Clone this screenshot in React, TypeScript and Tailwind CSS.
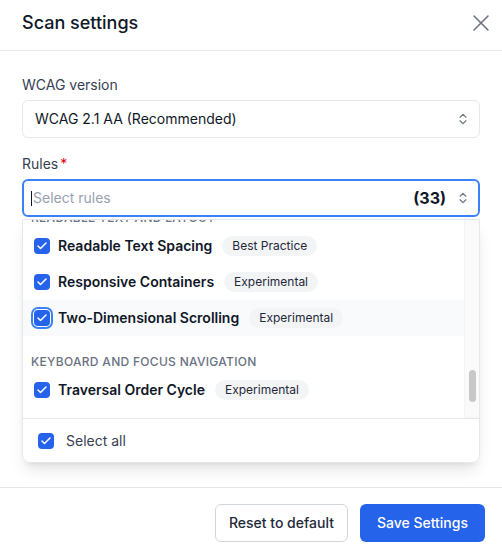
import { Check, ChevronsUpDown, X } from "lucide-react"

type Row =
  | { kind: "header"; title: string }
  | { kind: "rule"; name: string; badge: string; active?: boolean }

const rows: Row[] = [
  { kind: "header", title: "Readable text and layout" },
  { kind: "rule", name: "Readable Text Spacing", badge: "Best Practice" },
  { kind: "rule", name: "Responsive Containers", badge: "Experimental" },
  { kind: "rule", name: "Two-Dimensional Scrolling", badge: "Experimental", active: true },
  { kind: "header", title: "Keyboard and focus navigation" },
  { kind: "rule", name: "Traversal Order Cycle", badge: "Experimental" },
]

function Checkbox({ focused }: { focused?: boolean }) {
  return (
    <span
      className={
        "flex size-4 shrink-0 items-center justify-center rounded-[4px] bg-[#2563eb] text-white " +
        (focused ? "ring-2 ring-[#3b82f6] ring-offset-1" : "")
      }
    >
      <Check className="size-3" strokeWidth={3} />
    </span>
  )
}

export default function App() {
  return (
    <div className="flex min-h-[555px] w-full flex-col bg-white font-['Inter',sans-serif] text-gray-900">
      {/* Header */}
      <div className="flex h-[51px] items-center justify-between border-b border-gray-200 pr-[7px] pb-1 pl-[22px]">
        <h2 className="text-lg font-medium">Scan settings</h2>
        <X className="size-7 text-gray-500" strokeWidth={1.3} />
      </div>

      {/* Body */}
      <div className="flex flex-col px-[22px] pt-6 pb-6">
        <label className="mb-[5px] text-sm text-gray-700">WCAG version</label>
        <div className="flex h-[38px] items-center justify-between rounded-md border border-gray-200 pr-[9px] pl-3 text-sm text-gray-900">
          <span>WCAG 2.1 AA (Recommended)</span>
          <ChevronsUpDown className="size-3.5 text-gray-500" />
        </div>

        <label className="mt-4 mb-[5px] text-sm text-gray-700">
          Rules<span className="ml-0.5 text-red-600">*</span>
        </label>
        <div className="flex h-[38px] items-center justify-between rounded-md border-2 border-[#3b82f6] pr-[8px] pl-[7px]">
          <span className="flex items-center text-sm text-gray-400">
            <span className="mr-px h-[15px] w-px bg-gray-900" />
            Select rules
          </span>
          <span className="flex items-center gap-2.5">
            <span className="text-base font-bold text-gray-900">(33)</span>
            <ChevronsUpDown className="size-3.5 text-gray-500" />
          </span>
        </div>

        {/* Dropdown */}
        <div className="mt-[2px] overflow-hidden rounded-b-lg border border-gray-200 shadow-lg">
          <div className="flex h-[198px]">
            <div className="flex-1 overflow-hidden">
              <div className="mt-[-28px]">
                {rows.map((row, i) =>
                  row.kind === "header" ? (
                    <div
                      key={i}
                      className="h-9 px-2 pt-[18px] text-xs font-medium tracking-wide text-gray-500 uppercase"
                    >
                      {row.title}
                    </div>
                  ) : (
                    <div
                      key={i}
                      className={
                        "flex h-9 items-center gap-2 pl-[11px] " + (row.active ? "bg-gray-50" : "")
                      }
                    >
                      <Checkbox focused={row.active} />
                      <span className="text-sm font-semibold text-gray-900">{row.name}</span>
                      <span className="ml-0.5 rounded-full bg-gray-100 px-2.5 py-0.5 text-xs text-gray-800">
                        {row.badge}
                      </span>
                    </div>
                  )
                )}
              </div>
            </div>
            <div className="w-[15px] border-l border-gray-100 bg-[#fafafa]">
              <div className="mx-auto mt-[150px] h-[32px] w-[7px] rounded-full bg-[#c8c8c8]" />
            </div>
          </div>
          <div className="flex h-[44px] items-center gap-3 border-t border-gray-200 pl-[15px]">
            <Checkbox />
            <span className="text-sm text-gray-700">Select all</span>
          </div>
        </div>
      </div>

      {/* Footer */}
      <div className="flex justify-end gap-3 border-t border-gray-200 px-[17px] pt-4 pb-[13px]">
        <button className="h-[38px] rounded-md border border-gray-300 px-[13px] text-sm font-medium text-gray-800">
          Reset to default
        </button>
        <button className="h-[38px] rounded-md bg-[#2563eb] px-[17px] text-sm font-medium text-white">
          Save Settings
        </button>
      </div>
    </div>
  )
}
